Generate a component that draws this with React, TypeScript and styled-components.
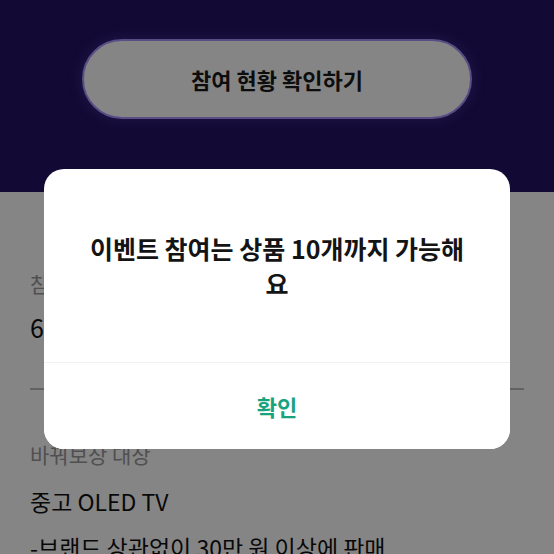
import React from 'react';
import styled, { createGlobalStyle } from 'styled-components';

const GlobalStyle = createGlobalStyle`
    html, body {
        margin: 0;
        padding: 0;
        background: #ffffff;
        font-family: "Noto Sans CJK KR", "Noto Sans", sans-serif;
    }
    * {
        box-sizing: border-box;
    }
`;

// Whole screen, the dim layer and the dialog lie over it
const Page = styled.div`
    position: relative;
    width: 554px;
    height: 554px;
    overflow: hidden;
    background: #ffffff;
`;

// Dark purple top area with the status button
const Hero = styled.section`
    height: 192px;
    padding-top: 39px;
    display: flex;
    justify-content: center;
    align-items: flex-start;
    background: #231366;
`;

const StatusButton = styled.button`
    width: 390px;
    height: 80px;
    border-radius: 40px;
    border: 2px solid #a996ff;
    background: #ffffff;
    box-shadow: 0 0 14px rgba(150, 120, 255, 0.25);
    font-family: inherit;
    font-size: 22px;
    font-weight: 700;
    color: #1a1a1a;
    cursor: pointer;
`;

const Details = styled.section`
    display: flex;
    flex-direction: column;
    padding: 0 30px;
`;

const FieldLabel = styled.div<{ $top: number }>`
    margin-top: ${props => props.$top}px;
    font-size: 21px;
    line-height: 28px;
    color: #9a9a9a;
    white-space: nowrap;
`;

const FieldValue = styled.div<{ $top: number; $size?: number }>`
    margin-top: ${props => props.$top}px;
    font-size: ${props => props.$size ?? 23}px;
    line-height: 30px;
    color: #111111;
    white-space: nowrap;
`;

const Divider = styled.hr`
    margin: 46px 0 0;
    border: none;
    height: 2px;
    background: #bcbcbc;
`;

const Dim = styled.div`
    position: absolute;
    inset: 0;
    background: rgba(0, 0, 0, 0.48);
`;

const Dialog = styled.div`
    position: absolute;
    left: 44px;
    top: 169px;
    width: 466px;
    height: 280px;
    border-radius: 20px;
    background: #ffffff;
    display: flex;
    flex-direction: column;
    overflow: hidden;
`;

const DialogMessage = styled.p`
    flex: 1;
    margin: 0;
    padding: 0 44px;
    display: flex;
    align-items: center;
    justify-content: center;
    text-align: center;
    font-size: 25px;
    font-weight: 700;
    line-height: 35px;
    color: #141414;
`;

const DialogButton = styled.button`
    height: 87px;
    flex-shrink: 0;
    border: none;
    border-top: 1px solid #f1f1f1;
    background: #ffffff;
    font-family: inherit;
    font-size: 22px;
    font-weight: 700;
    color: #17a37e;
    cursor: pointer;
`;

const App = () => {
    return (
        <>
            <GlobalStyle />
            <Page>
                <Hero>
                    <StatusButton>참여 현황 확인하기</StatusButton>
                </Hero>
                <Details>
                    <FieldLabel $top={77}>참여 기간</FieldLabel>
                    <FieldValue $top={15} $size={25}>6월 1일 ~ 6월 30일</FieldValue>
                    <Divider />
                    <FieldLabel $top={50}>바꿔보상 대상</FieldLabel>
                    <FieldValue $top={18}>중고 OLED TV</FieldValue>
                    <FieldValue $top={16}>-브랜드 상관없이 30만 원 이상에 판매</FieldValue>
                </Details>
                <Dim />
                <Dialog>
                    <DialogMessage>이벤트 참여는 상품 10개까지 가능해요</DialogMessage>
                    <DialogButton>확인</DialogButton>
                </Dialog>
            </Page>
        </>
    );
};

export default App;
